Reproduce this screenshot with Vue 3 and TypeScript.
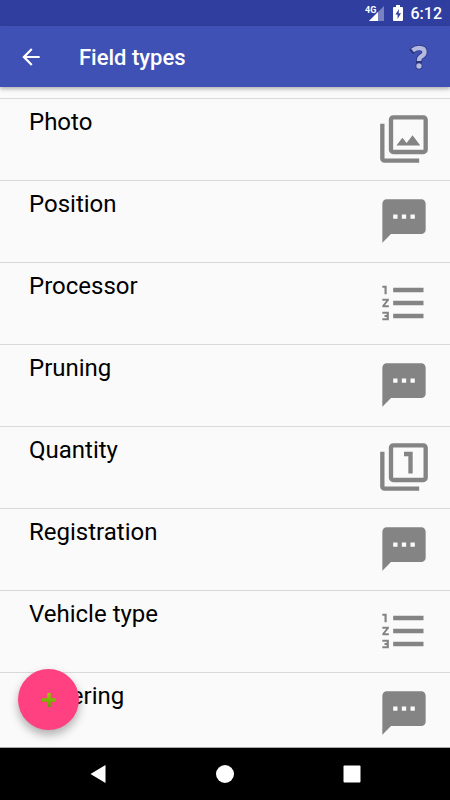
<script setup lang="ts">
type IconName = 'photos' | 'sms' | 'list' | 'number'

interface FieldType {
  name: string
  icon: IconName
}

const icons: Record<IconName, string> = {
  photos:
    'M15.96 10.29l-2.75 3.54-1.96-2.36L8.5 15h11l-3.54-4.71zM3 5H1v16c0 1.1.9 2 2 2h16v-2H3V5zm18-4H7c-1.1 0-2 .9-2 2v14c0 1.1.9 2 2 2h14c1.1 0 2-.9 2-2V3c0-1.1-.9-2-2-2zm0 16H7V3h14v14z',
  sms: 'M20 2H4c-1.1 0-1.99.9-1.99 2L2 22l4-4h14c1.1 0 2-.9 2-2V4c0-1.1-.9-2-2-2zM9 11H7V9h2v2zm4 0h-2V9h2v2zm4 0h-2V9h2v2z',
  list: 'M2 17h2v.5H3v1h1v.5H2v1h3v-4H2v1zm1-9h1V4H2v1h1v3zm-1 3h1.8L2 13.1v.9h3v-1H3.2L5 10.9V10H2v1zm5-6v2h14V5H7zm0 14h14v-2H7v2zm0-6h14v-2H7v2z',
  number:
    'M3 5H1v16c0 1.1.9 2 2 2h16v-2H3V5zm11 10h2V5h-4v2h2v8zm7-14H7c-1.1 0-2 .9-2 2v14c0 1.1.9 2 2 2h14c1.1 0 2-.9 2-2V3c0-1.1-.9-2-2-2zm0 16H7V3h14v14z',
}

const fieldTypes: FieldType[] = [
  { name: 'Photo', icon: 'photos' },
  { name: 'Position', icon: 'sms' },
  { name: 'Processor', icon: 'list' },
  { name: 'Pruning', icon: 'sms' },
  { name: 'Quantity', icon: 'number' },
  { name: 'Registration', icon: 'sms' },
  { name: 'Vehicle type', icon: 'list' },
  { name: 'Watering', icon: 'sms' },
]
</script>

<template>
  <div class="screen">
    <div class="status-bar">
      <svg class="signal" viewBox="0 0 20 18" aria-hidden="true">
        <path d="M19 2v15H4z" fill="#fff" fill-opacity="0.35" />
        <path d="M13 8v9H4z" fill="#fff" />
        <text x="0" y="9" class="network">4G</text>
      </svg>
      <svg class="battery" viewBox="0 0 10 16" aria-hidden="true">
        <path d="M3 0h4v2h2q1 0 1 1v12q0 1-1 1H1q-1 0-1-1V3q0-1 1-1h2z" fill="#fff" />
        <path d="M6 4L2.400 9.600h2.200V14L8 8.200H5.600z" fill="#303f9f" />
      </svg>
      <time class="clock">6:12</time>
    </div>

    <header class="app-bar">
      <button class="bar-button" type="button" aria-label="Back">
        <svg class="back-icon" viewBox="0 0 24 24" aria-hidden="true">
          <path d="M20 11H7.830l5.590-5.590L12 4l-8 8 8 8 1.410-1.410L7.830 13H20v-2z" fill="#fff" />
        </svg>
      </button>
      <h1 class="title">Field types</h1>
      <button class="bar-button" type="button" aria-label="Help">
        <svg class="help-icon" viewBox="0 0 24 32" fill="none" aria-hidden="true">
          <g stroke="#2a357c">
            <path d="M6.500 9q2.500-2 5.500-2q5.500 0 5.500 4q0 2.500-3 4.200q-2.500 1.300-2.500 4.300" stroke-width="6" stroke-linecap="square" />
            <circle cx="12" cy="25" r="2.500" stroke-width="2" />
          </g>
          <path d="M5.500 9.500q3-2.500 6.500-2.500q5.500 0 5.500 4q0 2.500-3 4.200q-2.500 1.300-2.500 4.800" stroke="#b3b9e0" stroke-width="4.500" />
          <circle cx="12" cy="25" r="2.700" fill="#b3b9e0" />
        </svg>
      </button>
    </header>

    <main class="content">
      <ul class="list">
        <li v-for="field in fieldTypes" :key="field.name" class="row">
          <span class="name">{{ field.name }}</span>
          <svg class="type-icon" viewBox="0 0 24 24" aria-hidden="true">
            <path :d="icons[field.icon]" />
          </svg>
        </li>
      </ul>
      <button class="fab" type="button" aria-label="Add field type">
        <svg class="plus" viewBox="0 0 14 14" aria-hidden="true">
          <defs>
            <linearGradient id="plus-fill" x1="0" y1="0" x2="0" y2="1">
              <stop offset="0" stop-color="#90d000" />
              <stop offset="1" stop-color="#629c00" />
            </linearGradient>
          </defs>
          <path d="M5.300 0h3.400v5.300H14v3.400H8.700V14H5.300V8.700H0V5.300h5.300z" fill="url(#plus-fill)" />
        </svg>
      </button>
    </main>

    <nav class="nav-bar" aria-label="System">
      <button class="nav-button" type="button" aria-label="Back">
        <svg viewBox="0 0 20 20" aria-hidden="true"><path d="M17.500 1v18L2.500 10z" /></svg>
      </button>
      <button class="nav-button" type="button" aria-label="Home">
        <svg viewBox="0 0 20 20" aria-hidden="true"><circle cx="10" cy="10" r="9" /></svg>
      </button>
      <button class="nav-button" type="button" aria-label="Recent apps">
        <svg viewBox="0 0 20 20" aria-hidden="true"><rect x="1.500" y="1.500" width="17" height="17" rx="1" /></svg>
      </button>
    </nav>
  </div>
</template>

<style>
body {
  margin: 0;
}
</style>

<style scoped>
.screen {
  display: flex;
  flex-direction: column;
  height: 100vh;
  background: #fafafa;
  color: #000;
  font-family: Roboto, sans-serif;
}

button {
  display: flex;
  align-items: center;
  justify-content: center;
  padding: 0;
  border: 0;
  background: none;
}

.status-bar {
  display: flex;
  flex: none;
  align-items: center;
  justify-content: flex-end;
  gap: 8px;
  height: 26px;
  padding-right: 8px;
  background: #303f9f;
  color: #fff;
}

.signal {
  width: 20px;
  height: 18px;
}

.network {
  fill: #fff;
  font-size: 9px;
  font-weight: 700;
}

.battery {
  width: 10px;
  height: 16px;
}

.clock {
  font-size: 16px;
  font-weight: 500;
  line-height: 24px;
  padding-top: 2px;
}

.app-bar {
  z-index: 1;
  display: flex;
  flex: none;
  align-items: center;
  height: 61px;
  background: #3f51b5;
  box-shadow: 0 2px 4px rgba(0, 0, 0, 0.3);
  color: #fff;
}

.bar-button {
  width: 62px;
  height: 61px;
}

.back-icon {
  width: 26px;
  height: 26px;
}

.help-icon {
  width: 24px;
  height: 32px;
}

.title {
  flex: 1;
  margin: 0;
  padding: 2px 0 0 17px;
  font-size: 22px;
  font-weight: 500;
  line-height: 32px;
}

.content {
  position: relative;
  flex: 1;
  min-height: 0;
  overflow: hidden;
}

.list {
  margin: 0;
  padding: 11px 0 0;
  list-style: none;
}

.row {
  display: flex;
  align-items: flex-start;
  justify-content: space-between;
  box-sizing: border-box;
  height: 82px;
  padding: 7px 20px 0 29px;
  border-top: 1px solid #d9d9d9;
}

.name {
  font-size: 24px;
  line-height: 32px;
}

.type-icon {
  width: 52px;
  height: 52px;
  margin-top: 7px;
  fill: #848484;
}

.fab {
  position: absolute;
  bottom: 17px;
  left: 18px;
  width: 61px;
  height: 61px;
  border-radius: 50%;
  background: #ff4081;
  box-shadow: 0 5px 10px rgba(0, 0, 0, 0.3);
}

.plus {
  width: 14px;
  height: 14px;
}

.nav-bar {
  display: flex;
  flex: none;
  align-items: center;
  justify-content: center;
  gap: 67px;
  height: 52px;
  border-top: 1px solid #aaa;
  background: #000;
}

.nav-button {
  width: 60px;
  height: 52px;
}

.nav-button svg {
  width: 20px;
  height: 20px;
  fill: #fff;
}
</style>
